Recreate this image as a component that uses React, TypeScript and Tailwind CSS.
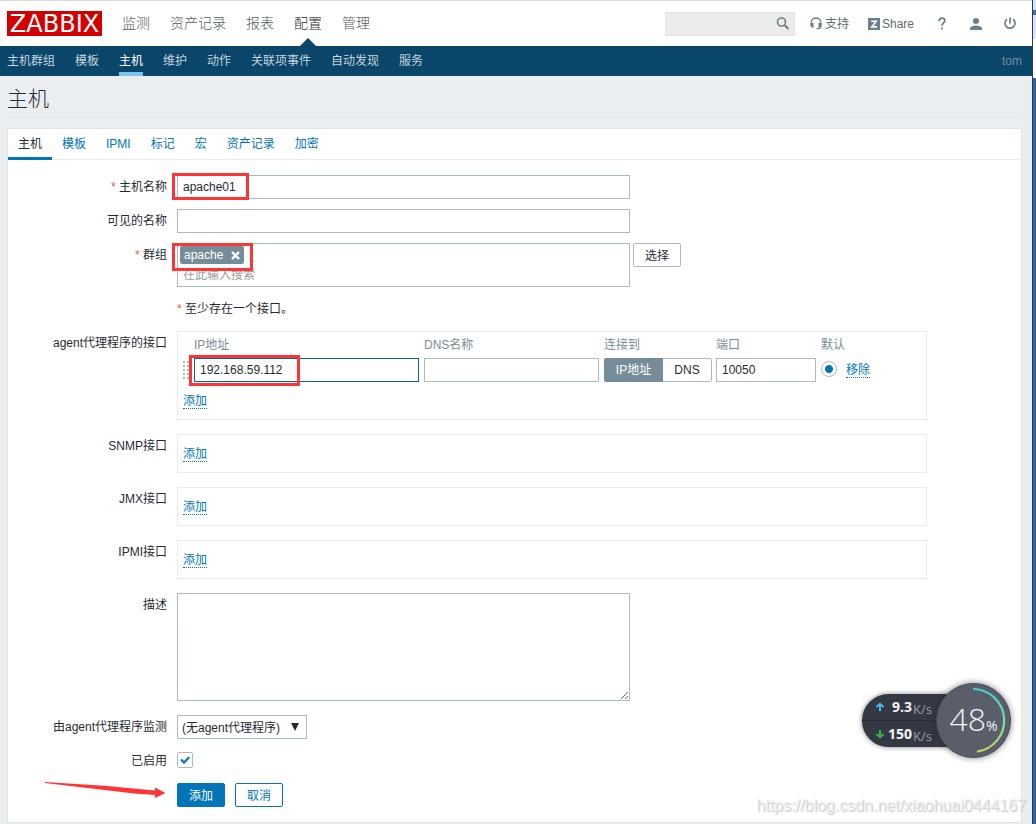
import React from "react";

const MAIN_MENU = ["监测", "资产记录", "报表", "配置", "管理"];
const SUB_MENU = ["主机群组", "模板", "主机", "维护", "动作", "关联项事件", "自动发现", "服务"];
const TABS = ["主机", "模板", "IPMI", "标记", "宏", "资产记录", "加密"];

const FIELD = "h-6 border border-[#acbbc2] bg-white px-[5px] text-xs text-[#1f2c33] outline-none";
const DOTTED = "border-b border-dotted border-[#0275b8] text-xs leading-[14px] text-[#0275b8]";

function Row({
  label,
  htmlFor,
  required,
  children,
}: {
  label?: string;
  htmlFor?: string;
  required?: boolean;
  children: React.ReactNode;
}) {
  return (
    <div className="flex items-start gap-[10px]">
      <label htmlFor={htmlFor} className="w-[159px] shrink-0 text-right leading-6">
        {required && <span className="text-[#e45959]">* </span>}
        {label}
      </label>
      <div className="relative min-w-0 flex-1">{children}</div>
    </div>
  );
}

function Header() {
  return (
    <header>
      <div className="flex h-[46px] items-center border-t border-[#d9dadd] bg-white pr-4 pl-[7px]">
        <a href="#home" className="flex h-[25px] w-[95px] items-center justify-center bg-[#d40000] font-['DejaVu_Sans',sans-serif] text-[24px] leading-none text-white">
          ZABBIX
        </a>
        <nav className="ml-5 flex h-full flex-1 gap-5 text-sm leading-[44px] font-light text-[#4d5a61]">
          {MAIN_MENU.map((item) => (
            <a key={item} href="#menu" className={item === "配置" ? "relative h-full text-[#1f2c33]" : "h-full"}>
              {item}
              {item === "配置" && (
                <svg className="absolute bottom-0 left-[6px]" width="16" height="8" viewBox="0 0 16 8" aria-hidden="true">
                  <path d="M0 8 8 0l8 8z" fill="#0a466a" />
                </svg>
              )}
            </a>
          ))}
        </nav>
        <div className="flex items-center text-xs text-[#5b6b74]">
          <div className="relative">
            <input aria-label="搜索" type="text" className="block h-6 w-[130px] border border-[#dfe4e7] bg-[#ebebeb] pr-6 pl-1 outline-none" />
            <button aria-label="执行搜索" className="absolute top-[5px] right-[5px]">
              <svg width="14" height="14" viewBox="0 0 14 14" fill="none" stroke="#69808d">
                <circle cx="5.5" cy="5" r="4" strokeWidth="1.6" />
                <path d="m8.500 8 4 4" strokeWidth="2" />
              </svg>
            </button>
          </div>
          <a href="#support" className="ml-[15px] flex items-center gap-[3px]">
            <svg width="12" height="13" viewBox="0 0 12 13" aria-hidden="true">
              <path d="M1.200 8V5.700C1.200 2.800 3.200 1 6 1s4.800 1.800 4.800 4.700V9c0 1.600-.8 2.600-2.400 2.600H6.500" fill="none" stroke="#69808d" strokeWidth="1.300" />
              <path d="M.6 6h3v4.500H2.200C1.200 10.500.6 9.800.6 9zM8.400 6h3v3c0 .9-.6 1.500-1.600 1.500H8.400z" fill="#69808d" />
            </svg>
            支持
          </a>
          <a href="#share" className="ml-[19px] flex items-center gap-[2px]">
            <svg width="12" height="12" viewBox="0 0 12 12" aria-hidden="true">
              <path d="M0 0h12v12H0z" fill="#69808d" />
              <path d="M3.200 3.200h5L3.800 8.900h5.200" fill="none" stroke="#fff" strokeWidth="1.600" />
            </svg>
            Share
          </a>
          <button aria-label="帮助" className="ml-6">
            <svg width="8" height="13" viewBox="0 0 8 13" fill="none" stroke="#69808d" strokeWidth="1.800">
              <path d="M1.200 4.200C1.200 2.200 2.300 1.200 4 1.200s2.800 1 2.800 2.500C6.800 5.800 4 5.900 4 8.800M4 10.500v2" />
            </svg>
          </button>
          <button aria-label="用户" className="ml-6">
            <svg width="12" height="12" viewBox="0 0 12 12" fill="#69808d">
              <circle cx="6" cy="3" r="3" />
              <path d="M0 12v-1.500C0 8.500 3.500 7.500 6 7.500s6 1 6 3V12z" />
            </svg>
          </button>
          <button aria-label="退出" className="ml-[22px]">
            <svg width="12" height="13" viewBox="0 0 12 13" fill="none" stroke="#69808d" strokeWidth="1.700">
              <path d="M3 2.200A5 5 0 1 0 9 2.200M6 .5v6" />
            </svg>
          </button>
        </div>
      </div>
      <div className="flex h-[30px] items-stretch justify-between bg-[#0a466a] pr-[10px] pl-[7px] text-xs text-[#c5d4dd]">
        <nav className="flex gap-5">
          {SUB_MENU.map((item) => (
            <a
              key={item}
              href="#submenu"
              className={
                item === "主机"
                  ? "border-b-4 border-[#7ac4ee] leading-[30px] text-white"
                  : "leading-[30px]"
              }
            >
              {item}
            </a>
          ))}
        </nav>
        <span className="leading-[30px] text-[#768d99]">tom</span>
      </div>
    </header>
  );
}

function Mark({ className }: { className: string }) {
  return <div aria-hidden="true" className={`pointer-events-none absolute border-[3px] border-[#ff3535] ${className}`} />;
}

function InterfaceTable() {
  return (
    <fieldset className="h-[89px] border border-[#ebebeb] pl-[5px]">
      <table className="table-fixed border-collapse">
        <colgroup>
          <col className="w-[11px]" />
          <col className="w-[230px]" />
          <col className="w-[180px]" />
          <col className="w-[112px]" />
          <col className="w-[105px]" />
          <col className="w-[25px]" />
          <col className="w-10" />
        </colgroup>
        <thead>
          <tr className="h-[26px] text-left text-[#768d99]">
            <th aria-label="排序" />
            <th className="p-0 font-normal">IP地址</th>
            <th className="p-0 font-normal">DNS名称</th>
            <th className="p-0 font-normal">连接到</th>
            <th className="p-0 font-normal">端口</th>
            <th className="p-0 font-normal whitespace-nowrap" colSpan={2}>默认</th>
          </tr>
        </thead>
        <tbody>
          <tr className="h-6">
            <td className="p-0">
              <svg className="block" width="7" height="18" viewBox="0 0 7 18" fill="#acbbc2" aria-hidden="true">
                {[0, 4, 8, 12, 16].map((y) => (
                  <path key={y} d={`M0 ${y}h2v2h-2zM4 ${y}h2v2h-2z`} />
                ))}
              </svg>
            </td>
            <td className="relative p-0">
              <input aria-label="IP地址" defaultValue="192.168.59.112" className="block h-6 w-[225px] border border-[#00659e] bg-white px-[5px] text-xs outline-none" />
              <Mark className="top-[-3px] left-[-5px] h-[31px] w-[111px]" />
            </td>
            <td className="p-0">
              <input aria-label="DNS名称" className={`${FIELD} block w-[175px]`} />
            </td>
            <td className="p-0">
              <div className="flex h-6 w-[108px]">
                <button type="button" className="w-[59px] rounded-l-[2px] bg-[#768d99] text-white">IP地址</button>
                <button type="button" className="flex-1 rounded-r-[2px] border border-l-0 border-[#acbbc2]">DNS</button>
              </div>
            </td>
            <td className="p-0">
              <input aria-label="端口" defaultValue="10050" className={`${FIELD} block w-[100px]`} />
            </td>
            <td className="p-0 pb-[2px]">
              <input
                type="radio"
                aria-label="默认"
                defaultChecked
                className="block size-4 appearance-none rounded-full border border-[#acbbc2] bg-[radial-gradient(circle,#0275b8_0_3.5px,transparent_4.5px)]"
              />
            </td>
            <td className="p-0">
              <button type="button" className={`${DOTTED} block`}>移除</button>
            </td>
          </tr>
        </tbody>
      </table>
      <button type="button" className={`${DOTTED} mt-3 block`}>添加</button>
    </fieldset>
  );
}

function EmptyInterface() {
  return (
    <fieldset className="flex h-[39px] items-center border border-[#ebebeb] pt-[2px] pl-[5px]">
      <button type="button" className={DOTTED}>添加</button>
    </fieldset>
  );
}

function HostForm() {
  return (
    <form className="flex flex-col gap-[14px] pt-[15px] pr-[94px] pb-[15px]" onSubmit={(e) => e.preventDefault()}>
      <div className="flex flex-col gap-[10px]">
        <Row label="主机名称" htmlFor="host" required>
          <input id="host" defaultValue="apache01" className={`${FIELD} block w-full max-w-[453px]`} />
          <Mark className="top-[-2px] left-[-5px] h-[27px] w-[77px]" />
        </Row>
        <Row label="可见的名称" htmlFor="visible">
          <input id="visible" className={`${FIELD} block w-full max-w-[453px]`} />
        </Row>
        <Row label="群组" htmlFor="groups" required>
          <div className="flex items-start gap-[3px]">
            <div className="h-11 w-full max-w-[453px] border border-[#acbbc2] px-[2px] pt-[2px]">
              <span className="flex h-[18px] w-16 items-center justify-between rounded-[2px] bg-[#768d99] px-1 text-white">
                apache
                <button type="button" aria-label="移除 apache">
                  <svg className="block" width="9" height="9" viewBox="0 0 9 9" stroke="#fff" strokeWidth="2.400">
                    <path d="m1 1 7 7M8 1 1 8" />
                  </svg>
                </button>
              </span>
              <input id="groups" placeholder="在此输入搜索" className="block h-[22px] w-full bg-transparent px-[3px] text-xs outline-none placeholder:text-[#9a9a9a]" />
            </div>
            <button type="button" className="h-6 w-12 shrink-0 rounded-[2px] border border-[#acbbc2] pt-px">选择</button>
          </div>
          <Mark className="top-0 left-[-5px] h-7 w-[81px]" />
        </Row>
        <Row>
          <p className="leading-6">
            <span className="text-[#e45959]">* </span>至少存在一个接口。
          </p>
        </Row>
        <Row label="agent代理程序的接口">
          <InterfaceTable />
        </Row>
      </div>
      <Row label="SNMP接口">
        <EmptyInterface />
      </Row>
      <Row label="JMX接口">
        <EmptyInterface />
      </Row>
      <Row label="IPMI接口">
        <EmptyInterface />
      </Row>
      <Row label="描述" htmlFor="description">
        <textarea id="description" className="block h-[108px] w-full max-w-[453px] resize border border-[#acbbc2] p-1 outline-none" />
      </Row>
      <div className="flex flex-col gap-[10px]">
        <Row label="由agent代理程序监测" htmlFor="proxy">
          <div className="relative w-[130px]">
            <select id="proxy" className="block h-6 w-full appearance-none border border-[#acbbc2] bg-white px-1 pt-[2px] text-xs outline-none">
              <option>(无agent代理程序)</option>
            </select>
            <svg className="pointer-events-none absolute top-2 right-2" width="8" height="8" viewBox="0 0 8 8" aria-hidden="true">
              <path d="M0 0h8L4 8z" fill="#1f2c33" />
            </svg>
          </div>
        </Row>
        <Row label="已启用" htmlFor="enabled">
          <div className="flex h-6 items-start pt-[3px]">
            <div className="relative size-4">
              <input id="enabled" type="checkbox" defaultChecked className="block size-4 appearance-none rounded-[2px] border border-[#acbbc2] bg-white" />
              <svg className="pointer-events-none absolute top-1 left-[3px]" width="10" height="8" viewBox="0 0 10 8" fill="none" stroke="#0275b8" strokeWidth="2.200" aria-hidden="true">
                <path d="M1 3.500 4 6.500 9.200 1.200" />
              </svg>
            </div>
          </div>
        </Row>
        <Row>
          <div className="flex gap-[10px]">
            <button type="submit" className="h-6 w-12 rounded-[2px] border border-[#0275b8] bg-[#0275b8] pt-px text-white">添加</button>
            <button type="button" className="h-6 w-12 rounded-[2px] border border-[#0275b8] pt-px text-[#0275b8]">取消</button>
          </div>
          <svg className="pointer-events-none absolute top-[-2px] left-[-133px]" width="122" height="18" viewBox="0 0 122 18" aria-hidden="true">
            <path d="M1 1 60 4.800 111 9.500V6.500l10.500 5.500L111 17v-3L90 12.500 1 2z" fill="#ff3535" />
          </svg>
        </Row>
      </div>
    </form>
  );
}

function Speed({ value, color, path }: { value: string; color: string; path: string }) {
  return (
    <div className="flex flex-1 items-center pl-[13px]">
      <svg width="10" height="10" viewBox="0 0 10 10" fill="none" stroke={color} strokeWidth="2" aria-hidden="true">
        <path d={path} />
      </svg>
      <span className="w-[27px] text-right text-sm font-bold">{value}</span>
      <span className="pt-[3px] pl-px text-[13px] leading-4 text-[#9a9ea8]">K/s</span>
    </div>
  );
}

function SpeedWidget() {
  return (
    <div className="absolute top-[683px] right-[25px] flex h-[75px] w-[149px] items-center font-['Open_Sans',sans-serif] text-[#f2f3f5]">
      <div className="flex h-[53px] w-[100px] flex-col divide-y divide-[#2b2e37] rounded-l-full bg-[#343842] shadow-[0_0_5px_rgba(40,42,50,0.6)]">
        <Speed value="9.3" color="#4db4ef" path="M5 9V2M1.500 5 5 1.800 8.500 5" />
        <Speed value="150" color="#35b548" path="M5 1v7M1.500 5 5 8.200 8.500 5" />
      </div>
      <div className="absolute top-0 right-0 flex size-[75px] items-center justify-center rounded-full border border-[#4b4e59] bg-[#5a5e6b] shadow-[0_0_6px_rgba(40,42,50,0.6)]">
        <svg className="absolute inset-0" width="73" height="73" viewBox="0 0 73 73" fill="none" aria-hidden="true">
          <defs>
            <linearGradient id="gauge" x1="0" y1="0" x2="0" y2="1">
              <stop offset="0" stopColor="#43cfd3" />
              <stop offset=".55" stopColor="#7fdc9c" />
              <stop offset="1" stopColor="#c3d35c" />
            </linearGradient>
          </defs>
          <path d="M36 5A31.500 31.500 0 0 1 40 67.700" stroke="url(#gauge)" strokeWidth="2.200" />
        </svg>
        <span className="flex items-baseline pb-1 font-light">
          <span className="text-[32px] leading-none">48</span>
          <span className="text-sm leading-none font-normal">%</span>
        </span>
      </div>
    </div>
  );
}

export default function App() {
  return (
    <div className="relative flex min-h-screen overflow-hidden bg-[#ebeef0] font-['Liberation_Sans','Noto_Sans_CJK_SC',sans-serif] text-xs text-[#1f2c33]">
      <div className="min-w-0 flex-1">
        <Header />
        <main className="pr-[10px] pl-[7px]">
          <h1 className="mb-[10px] h-[42px] border-b border-[#dfe4e7] text-[21px] leading-[46px] font-light">主机</h1>
          <section className="border border-[#dfe4e7] bg-white">
            <nav className="flex h-[31px] border-b border-[#ebebeb]">
              {TABS.map((tab, i) => (
                <a
                  key={tab}
                  href="#tab"
                  className={
                    i === 0
                      ? "h-[31px] border-b-[3px] border-[#0275b8] px-[10px] leading-[30px]"
                      : "px-[10px] leading-[30px] text-[#0275b8]"
                  }
                >
                  {tab}
                </a>
              ))}
            </nav>
            <HostForm />
          </section>
        </main>
      </div>
      <div aria-hidden="true" className="flex w-1 shrink-0 flex-col border-l border-[#2c3a4a]">
        <div className="h-[10px] bg-[#d9e6f7]" />
        <div className="h-[5px] bg-[#4a6c9b]" />
        <div className="h-6 bg-[#d9e6f7]" />
        <div className="h-[39px] bg-white" />
        <div className="flex-1 bg-[#33639f]" />
      </div>
      <SpeedWidget />
      <div className="pointer-events-none absolute top-[796px] right-[10px] text-base leading-5 text-[#ececee] [text-shadow:1px_1px_1px_#c4c5c8]">
        https://blog.csdn.net/xiaohuai0444167
      </div>
    </div>
  );
}
